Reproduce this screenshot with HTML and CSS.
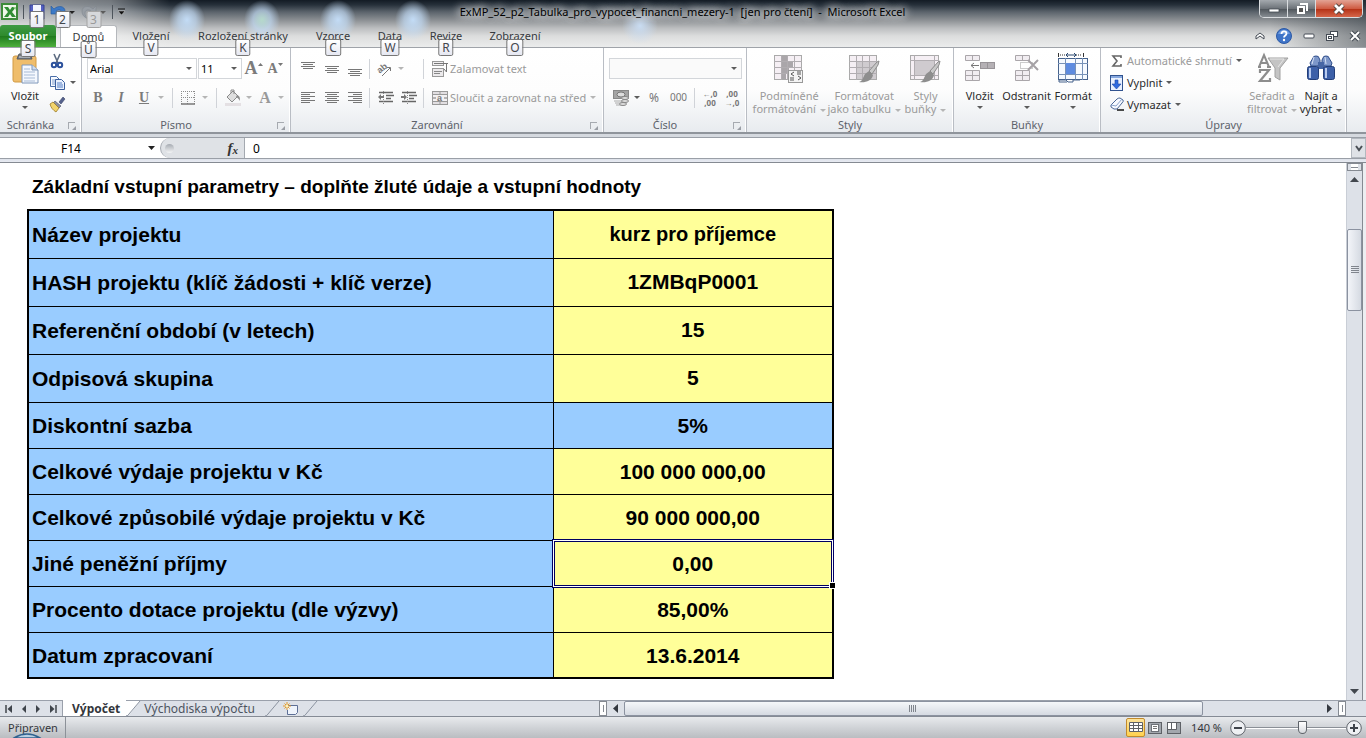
FILE: index.html
```html
<!DOCTYPE html>
<html lang="cs">
<head>
<meta charset="utf-8">
<title>ExMP_52_p2_Tabulka_pro_vypocet_financni_mezery-1 - Microsoft Excel</title>
<link rel="stylesheet" href="styles.css">
</head>
<body>
<header class="top">
  <div class="titlebar">
    <div class="qat">
      <svg class="logo" width="18" height="18" viewBox="0 0 18 18"><rect x="1" y="1" width="15" height="15" fill="#eef7ea" stroke="#3c8a3a" stroke-width="2"/><path d="M3 4h4l2 3 2-3h4l-4 5 4 5h-4l-2-3-2 3H3l4-5z" fill="#2f8d34"/><path d="M12 4h3v3z" fill="#9bd08f"/></svg>
      <span class="bar"></span>
      <button class="q q1" aria-label="Uložit"><svg width="16" height="16" viewBox="0 0 16 16"><path d="M1 1h14v14H1z" fill="#5560c4" stroke="#34408f"/><path d="M4 1h8v8H4z" fill="#f4f6ff"/><path d="M4 11h8v4H4z" fill="#dfe3f5"/></svg><kbd>1</kbd></button>
      <button class="q q2" aria-label="Zpět"><svg width="16" height="16" viewBox="0 0 16 16"><path d="M1 2v8h8L6 7c3-2 6-1 6 2 0 2-1 4-3 6 4-2 6-4 6-8 0-5-7-6-11-2z" fill="#3d79c6" stroke="#24589c" stroke-width=".6"/></svg><i class="caret dark"></i><kbd>2</kbd></button>
      <button class="q q3" aria-label="Znovu"><svg width="16" height="16" viewBox="0 0 16 16"><path d="M15 2v8H7l3-3C7 5 4 6 4 9c0 2 1 4 3 6-4-2-6-4-6-8 0-5 7-6 11-2z" fill="#979da4" stroke="#7f868e" stroke-width=".6"/></svg><i class="caret"></i><kbd class="off">3</kbd></button>
      <span class="bar"></span>
      <button class="q" aria-label="Přizpůsobit panel"><svg width="9" height="8" viewBox="0 0 9 8"><path d="M1 1h7" stroke="#111"/><path d="M1 3h7L4.500 7z" fill="#111" stroke="#eee" stroke-width=".4"/></svg></button>
    </div>
    <h1><span>ExMP_52_p2_Tabulka_pro_vypocet_financni_mezery-1&nbsp; [jen pro čtení]&nbsp; -&nbsp; Microsoft Excel</span></h1>
    <div class="wincontrols">
      <button aria-label="Minimalizovat"><svg width="14" height="12" viewBox="0 0 14 12"><rect x="2" y="6" width="10" height="3" fill="#fff" stroke="#444b53" stroke-width=".8"/></svg></button>
      <button aria-label="Obnovit"><svg width="14" height="14" viewBox="0 0 14 14"><path d="M5 2h7v7" fill="none" stroke="#fff" stroke-width="2"/><rect x="3" y="5" width="6" height="6" fill="#555" stroke="#fff" stroke-width="2"/></svg></button>
      <button class="close" aria-label="Zavřít"><svg width="14" height="12" viewBox="0 0 14 12"><path d="M3 2l8 8M11 2l-8 8" stroke="#56453f" stroke-width="4.600"/><path d="M3 2l8 8M11 2l-8 8" stroke="#fff" stroke-width="2.800"/></svg></button>
    </div>
  </div>
  <div class="tabrow">
    <nav class="tabs">
      <button class="file">Soubor<kbd>S</kbd></button>
      <button class="active">Domů<kbd>Ů</kbd></button>
      <button>Vložení<kbd>V</kbd></button>
      <button>Rozložení stránky<kbd>K</kbd></button>
      <button>Vzorce<kbd>C</kbd></button>
      <button>Data<kbd>W</kbd></button>
      <button>Revize<kbd>R</kbd></button>
      <button>Zobrazení<kbd>O</kbd></button>
    </nav>
    <div class="docs">
      <button aria-label="Sbalit pás karet"><svg width="10" height="8" viewBox="0 0 10 8"><path d="M1 7V4l4-3 4 3v3L5 4z" fill="#fff" stroke="#444b54"/></svg></button>
      <button aria-label="Nápověda"><svg width="16" height="16" viewBox="0 0 16 16"><circle cx="8" cy="8" r="7.500" fill="#3f74c8" stroke="#2d5aa6"/><path d="M2 6a6.500 6.500 0 0 1 12 0z" fill="#6e9be0"/><path d="M5.500 6c0-3.500 5-3.500 5-.5 0 2-2.500 2-2.500 4" fill="none" stroke="#fff" stroke-width="1.800"/><circle cx="8" cy="12" r="1.200" fill="#fff"/></svg></button>
      <button aria-label="Minimalizovat sešit"><svg width="12" height="6" viewBox="0 0 12 6"><rect x="1" y="1" width="10" height="4" rx="1" fill="#fff" stroke="#444b54"/></svg></button>
      <button aria-label="Obnovit sešit"><svg width="12" height="12" viewBox="0 0 12 12"><rect x="4.500" y="1.500" width="7" height="5" fill="#fff" stroke="#444b54"/><rect x=".5" y="4.500" width="7" height="6" fill="#fff" stroke="#444b54"/><rect x="2.500" y="6.500" width="3" height="2" fill="none" stroke="#444b54"/></svg></button>
      <button aria-label="Zavřít sešit"><svg width="12" height="10" viewBox="0 0 12 10"><path d="M2 1l8 8M10 1L2 9" stroke="#444b54" stroke-width="4"/><path d="M2 1l8 8M10 1L2 9" stroke="#fff" stroke-width="2"/></svg></button>
    </div>
  </div>
</header>

<section class="ribbon">
  <div class="group g-clip">
    <div class="body">
      <button class="big"><svg width="32" height="32" viewBox="0 0 32 32"><rect x="4" y="3" width="23" height="26" rx="2" fill="#efbd6b" stroke="#d29b45"/><path d="M10 1h11l2 5H8z" fill="#777c84" stroke="#555b63"/><path d="M10 4h11" stroke="#d8dce2"/><path d="M13 12h10l6 5v13H13z" fill="#f4f8fe" stroke="#7e97ba"/><path d="M23 12v5h6" fill="#cddcf0" stroke="#7e97ba"/><path d="M15 16h6M15 19h11M15 22h11M15 25h11M15 28h11" stroke="#a8bbd6"/></svg><span>Vložit</span><i class="caret"></i></button>
      <div class="stack">
        <button aria-label="Vyjmout"><svg width="16" height="16" viewBox="0 0 16 16"><path d="M5 1l4 9M11 1L7 10" stroke="#5c6b80" stroke-width="1.600"/><circle cx="5" cy="12" r="2.200" fill="none" stroke="#2c519c" stroke-width="2"/><circle cx="11" cy="12" r="2.200" fill="none" stroke="#2c519c" stroke-width="2"/></svg></button>
        <button aria-label="Kopírovat"><svg width="16" height="16" viewBox="0 0 16 16"><path d="M1.500 1.500h6l3 3v7h-9z" fill="#f7faff" stroke="#4a6ea8"/><path d="M3 5h5M3 7h5M3 9h5" stroke="#7f9ccc"/><path d="M6.500 4.500h6l3 3v7h-9z" fill="#eaf1fd" stroke="#3b5f9d"/><path d="M8 8h5M8 10h6M8 12h6" stroke="#557fc4"/></svg><i class="caret"></i></button>
        <button aria-label="Kopírovat formát"><svg width="16" height="16" viewBox="0 0 16 16"><path d="M10 6l4-5 2 2-4 5z" fill="#54618c" stroke="#3b4468" stroke-width=".6"/><path d="M6 5l6 5-2 2-6-5z" fill="#8b8fa0" stroke="#4f5468" stroke-width=".6"/><path d="M4 6l6 6-3 4C4 14 2 12 1 8z" fill="#f2d46c" stroke="#9a7a2a" stroke-width=".8"/></svg></button>
      </div>
    </div>
    <h2>Schránka<i class="launch"></i></h2>
  </div>

  <div class="group g-font">
    <div class="body rows">
      <div class="row r-font1">
        <label class="combo"><select aria-label="Písmo"><option>Arial</option></select><i class="caret"></i></label>
        <label class="combo"><select aria-label="Velikost písma"><option>11</option></select><i class="caret"></i></label>
        <button class="serif s18" aria-label="Zvětšit písmo">A<svg width="5" height="16" viewBox="0 0 5 16"><path d="M0 5h5L2.500 2z" fill="#777"/></svg></button>
        <button class="serif s14" aria-label="Zmenšit písmo">A<svg width="5" height="16" viewBox="0 0 5 16"><path d="M0 2h5L2.500 5z" fill="#777"/></svg></button>
      </div>
      <div class="row r-font2">
        <button class="serif s14">B</button>
        <button class="serif s14 it">I</button>
        <button class="serif s14 un">U</button>
        <i class="caret lt"></i><span class="sep"></span>
        <button aria-label="Ohraničení"><svg width="14" height="14" viewBox="0 0 14 14"><path d="M.5 0v13M6.500 0v13M13.500 0v13M0 .5h14M0 6.500h14" stroke="#8c8c8c" stroke-dasharray="1 1"/><path d="M0 13h14" stroke="#777" stroke-width="1.500"/></svg></button>
        <i class="caret lt"></i><span class="sep"></span>
        <button aria-label="Barva výplně"><svg width="17" height="17" viewBox="0 0 17 17"><path d="M2 8l6-6 5 5-6 6z" fill="#dedede" stroke="#8a8a8a"/><path d="M6 4V1h3v4" fill="none" stroke="#8a8a8a"/><path d="M12 6c3 1 3 3 3 6-1-2-2-3-4-4z" fill="#8a8a8a"/><path d="M0 14h16v3H0z" fill="#e4e0e3"/></svg></button>
        <i class="caret lt"></i>
        <button class="serif s16 lite">A</button>
        <i class="caret lt"></i>
      </div>
    </div>
    <h2>Písmo<i class="launch"></i></h2>
  </div>

  <div class="group g-align">
    <div class="body rows">
      <div class="row r-al1">
        <button aria-label="Nahoru"><svg width="14" height="14" viewBox="0 0 14 14"><path d="M0 .5h14M2 2.500h10M0 4.500h14M2 6.500h10" stroke="#777"/></svg></button>
        <button aria-label="Na střed svisle"><svg width="14" height="14" viewBox="0 0 14 14"><path d="M0 4.500h14M2 6.500h10M0 8.500h14M2 10.500h10" stroke="#777"/></svg></button>
        <button aria-label="Dolů"><svg width="14" height="14" viewBox="0 0 14 14"><path d="M0 7.500h14M2 9.500h10M0 11.500h14M2 13.500h10" stroke="#777"/></svg></button>
        <span class="sep"></span>
        <button aria-label="Orientace"><svg width="18" height="16" viewBox="0 0 18 16"><text x="1" y="11" class="abtext" transform="rotate(-40 5 8)">ab</text><path d="M6 15l8-8M11 6.500h3.500V10" fill="none" stroke="#777"/></svg></button>
        <i class="caret lt"></i><span class="sep end"></span>
        <button class="cmd off"><svg width="16" height="16" viewBox="0 0 16 16"><rect x=".5" y=".5" width="11" height="4" fill="#f1eff1" stroke="#999"/><path d="M2 2.500h14M14.500 3v7M12 8l2.500 3V8" fill="none" stroke="#777"/><rect x=".5" y="7.500" width="11" height="8" fill="#eceaec" stroke="#999"/><path d="M2 10.500h8M2 12.500h6" stroke="#888"/></svg>Zalamovat text</button>
      </div>
      <div class="row r-al2">
        <button aria-label="Vlevo"><svg width="14" height="12" viewBox="0 0 14 12"><path d="M0 .5h14M0 2.500h9M0 4.500h14M0 6.500h9M0 8.500h14M0 10.500h9" stroke="#777"/></svg></button>
        <button aria-label="Na střed"><svg width="14" height="12" viewBox="0 0 14 12"><path d="M0 .5h14M2 2.500h10M0 4.500h14M2 6.500h10M0 8.500h14M2 10.500h10" stroke="#777"/></svg></button>
        <button aria-label="Vpravo"><svg width="14" height="12" viewBox="0 0 14 12"><path d="M0 .5h14M5 2.500h9M0 4.500h14M5 6.500h9M0 8.500h14M5 10.500h9" stroke="#777"/></svg></button>
        <span class="sep"></span>
        <button aria-label="Zmenšit odsazení"><svg width="16" height="14" viewBox="0 0 16 14"><path d="M1 1.500h14M8 4.500h8M8 7.500h5M1 10.500h14" stroke="#666" stroke-width="1.500"/><path d="M5.500 0v14" stroke="#888" stroke-dasharray="1 1"/><path d="M0 6l3-3v2h3v2H3v2z" fill="#777"/></svg></button>
        <button aria-label="Zvětšit odsazení"><svg width="16" height="14" viewBox="0 0 16 14"><path d="M1 1.500h14M8 4.500h8M8 7.500h5M1 10.500h14" stroke="#666" stroke-width="1.500"/><path d="M6.500 0v14" stroke="#888" stroke-dasharray="1 1"/><path d="M6 6L3 3v2H0v2h3v2z" fill="#777"/></svg></button>
        <span class="sep end2"></span>
        <button class="cmd off"><svg width="16" height="14" viewBox="0 0 16 14"><rect x=".5" y=".5" width="15" height="13" fill="#e2dfe2" stroke="#999"/><path d="M0 3.500h16M0 10.500h16M8 0v3M8 11v3" stroke="#999"/><rect x="1" y="4" width="14" height="6" fill="#f3f1f3"/><path d="M1 7h3M12 7h3" stroke="#777"/><text x="5" y="10" class="abtext">a</text></svg>Sloučit a zarovnat na střed<i class="caret lt"></i></button>
      </div>
    </div>
    <h2>Zarovnání<i class="launch"></i></h2>
  </div>

  <div class="group g-num">
    <div class="body rows">
      <div class="row">
        <label class="combo wide"><select aria-label="Formát čísla" disabled><option></option></select><i class="caret"></i></label>
      </div>
      <div class="row r-num2">
        <button aria-label="Účetnický formát"><svg width="17" height="17" viewBox="0 0 17 17"><rect x=".5" y="1.500" width="15" height="8" fill="#a4a4a4" stroke="#888"/><ellipse cx="8" cy="5.500" rx="4" ry="2.500" fill="#ddd" stroke="#777"/><path d="M1 12h9M2 14h8M3 16h7" stroke="#aaa"/><ellipse cx="12" cy="9" rx="3.500" ry="1.500" fill="#ddd" stroke="#888"/><ellipse cx="12" cy="12" rx="3.500" ry="1.500" fill="#ddd" stroke="#888"/><ellipse cx="10" cy="15" rx="3.500" ry="1.500" fill="#ddd" stroke="#888"/></svg></button>
        <i class="caret"></i>
        <button class="numt">%</button>
        <button class="numt small">000</button>
        <span class="sep"></span>
        <button class="dec" aria-label="Přidat desetinné místo"><span>←,0</span><span>,00</span></button>
        <button class="dec" aria-label="Odebrat desetinné místo"><span>,00</span><span>→,0</span></button>
      </div>
    </div>
    <h2>Číslo<i class="launch"></i></h2>
  </div>

  <div class="group g-style">
    <div class="body">
      <button class="big off"><svg width="32" height="32" viewBox="0 0 32 32"><rect x="1.500" y="2.500" width="27" height="24" fill="#f5eff4" stroke="#aaa"/><path d="M8 3h6v5h6v6h-4v6h-3v6H8z" fill="#aaa6aa"/><path d="M1 8.500h28M1 14.500h28M1 20.500h28M8.500 2v25M14.500 2v25M21.500 2v25" stroke="#b1adb1"/><rect x="15.500" y="17.500" width="14" height="12" fill="#f4f4f4" stroke="#999"/><path d="M21 19l-3 2 3 2M17 25h4M17 27h4M24 19h4M24 21h4M25 23l3 2-3 2" fill="none" stroke="#555"/></svg><span>Podmíněné<br>formátování<i class="caret lt"></i></span></button>
      <button class="big off"><svg width="32" height="32" viewBox="0 0 32 32"><rect x="1.500" y="2.500" width="27" height="24" fill="#f5eff4" stroke="#aaa"/><path d="M9 9h19v17H9z" fill="#cfcbcf"/><path d="M1 8.500h28M1 14.500h28M1 20.500h28M8.500 2v25M14.500 2v25M21.500 2v25" stroke="#b1adb1"/><path d="M21 18l8-9 2-1-1 4-6 9z" fill="#c8c8c8" stroke="#8b8b8b"/><path d="M21 18l4 4c-1 6-8 8-14 7 4-1 4-5 6-8z" fill="#8e8e8e"/></svg><span>Formátovat<br>jako tabulku<i class="caret lt"></i></span></button>
      <button class="big off"><svg width="32" height="32" viewBox="0 0 32 32"><rect x="1.500" y="2.500" width="28" height="24" fill="#f5eff4" stroke="#aaa"/><path d="M6 8h19v14H6z" fill="#cfcbcf"/><path d="M1 7.500h29M1 22.500h29M5.500 2v25M25.500 2v25" stroke="#b1adb1"/><path d="M21 18l8-9 2-1-1 4-6 9z" fill="#c8c8c8" stroke="#8b8b8b"/><path d="M21 18l4 4c-1 6-8 8-14 7 4-1 4-5 6-8z" fill="#8e8e8e"/></svg><span>Styly<br>buňky<i class="caret lt"></i></span></button>
    </div>
    <h2>Styly</h2>
  </div>

  <div class="group g-cells">
    <div class="body">
      <button class="big"><svg width="32" height="32" viewBox="0 0 32 32"><g fill="#f1edf1" stroke="#aaa6aa"><path d="M1.500 2.500h14v5h-14zM8.500 2.500v5M1.500 17.500h14v10h-14zM8.500 17.500v10M1.500 22.500h14"/></g><rect x="16.500" y="9.500" width="14" height="6" fill="#b5b1b5" stroke="#989498"/><path d="M23.500 10v6" stroke="#989498"/><path d="M7 12.500h8M10 10l-3 2.500L10 15" fill="none" stroke="#777"/></svg><span>Vložit</span><i class="caret"></i></button>
      <button class="big"><svg width="32" height="32" viewBox="0 0 32 32"><g fill="#f1edf1" stroke="#aaa6aa"><path d="M4.500 2.500h14v5h-14zM11.500 2.500v5M4.500 17.500h14v10h-14zM11.500 17.500v10M4.500 22.500h14"/></g><path d="M9.500 9.500h12v6h-12z" fill="none" stroke="#999" stroke-dasharray="1 1"/><path d="M17 7l10 10M27 7L17 17" stroke="#a5a1a5" stroke-width="2"/></svg><span>Odstranit</span><i class="caret"></i></button>
      <button class="big"><svg width="32" height="32" viewBox="0 0 32 32"><path d="M1.500 0v4M26.500 0v4" stroke="#333"/><path d="M3 2h6M19 2h6" stroke="#333" stroke-dasharray="1 1"/><path d="M9 2h10M11 0L9 2l2 2M17 0l2 2-2 2" stroke="#29466e" fill="none"/><rect x="1.500" y="5.500" width="29" height="21" fill="#f6faff" stroke="#46628c"/><path d="M1 10.500h30M1 21.500h30M8.500 5v22M18.500 5v22M25.500 5v22" stroke="#7892b8"/><rect x="9" y="10" width="9" height="11" fill="#5d8be0"/><path d="M2 27h7l2 2h5v-2h7M2 27v2h8" fill="none" stroke="#46628c"/></svg><span>Formát</span><i class="caret"></i></button>
    </div>
    <h2>Buňky</h2>
  </div>

  <div class="group g-edit">
    <div class="body">
      <div class="stack wide">
        <button class="cmd off"><svg width="14" height="14" viewBox="0 0 14 14"><path d="M11 4V2H3l4 5-4 5h8v-2" fill="none" stroke="#666" stroke-width="1.600"/></svg>Automatické shrnutí<i class="caret"></i></button>
        <button class="cmd"><svg width="14" height="16" viewBox="0 0 14 16"><rect x=".5" y=".5" width="12" height="15" fill="#e9f1ff" stroke="#31538f"/><path d="M1 2h11" stroke="#87a8df" stroke-width="2"/><path d="M5 5h3v4h3l-4.500 5L2 9h3z" fill="#2f6be0" stroke="#1b47a5" stroke-width=".6"/></svg>Vyplnit<i class="caret"></i></button>
        <button class="cmd"><svg width="14" height="14" viewBox="0 0 14 14"><path d="M1 8l6-6q1-1 3-1l3 2q1 1-1 3l-5 6H4L1 10z" fill="#f8faff" stroke="#4a6796"/><path d="M1 8l5 1 6-7" fill="none" stroke="#8ba4cc"/><path d="M7 13h7" stroke="#111" stroke-width="1.500"/></svg>Vymazat<i class="caret"></i></button>
      </div>
      <button class="big off"><svg width="32" height="32" viewBox="0 0 32 32"><path d="M12 5h20l-8 10v12l-5-3v-9z" fill="#c4c4c4" stroke="#a0a0a0"/><path d="M14 6h14l-6 8" fill="none" stroke="#e6e6e6"/><path d="M3 14L8 2l5 12M5 10h6M2 14h3M11 14h4" fill="none" stroke="#8d8d8d" stroke-width="2"/><path d="M4 20v-3h9L4 28h10v-3" fill="none" stroke="#8d8d8d" stroke-width="2.200"/></svg><span>Seřadit a<br>filtrovat<i class="caret lt"></i></span></button>
      <button class="big"><svg width="32" height="32" viewBox="0 0 32 32"><path d="M8 5q0-2 3-2t3 2l1 2v2l-2 4H6l-1-3z" fill="#7d97c9" stroke="#2f4d8a"/><path d="M18 5q0-2 3-2t3 2l3 5-1 3h-7l-2-4V7z" fill="#7d97c9" stroke="#2f4d8a"/><path d="M13 9h6v7h-6z" fill="#4666a5"/><rect x="2.500" y="13.500" width="11" height="13" rx="2" fill="#3d60a8" stroke="#233e78"/><rect x="18.500" y="13.500" width="11" height="13" rx="2" fill="#3d60a8" stroke="#233e78"/><path d="M5 15v10M21 15v10" stroke="#b9cbee" stroke-width="2"/><path d="M9 4l-2 7M20 4l1 7" stroke="#d5e0f5"/></svg><span>Najít a<br>vybrat<i class="caret"></i></span></button>
    </div>
    <h2>Úpravy</h2>
  </div>
</section>

<div class="formulabar">
  <input class="namebox" aria-label="Pole názvů" value="F14">
  <button class="namearrow" aria-label="Názvy"><svg width="7" height="4" viewBox="0 0 7 4"><path d="M0 0h7L3.500 4z" fill="#222"/></svg></button>
  <div class="fxarea"><span class="knob"></span><button class="fx" aria-label="Vložit funkci">f<small>x</small></button></div>
  <input class="formula" aria-label="Řádek vzorců" value="0">
  <button class="expand" aria-label="Rozbalit řádek vzorců"><svg width="8" height="7" viewBox="0 0 8 7"><path d="M1 1l3 4 3-4" fill="none" stroke="#4a4f56" stroke-width="2"/></svg></button>
</div>

<main class="workspace">
  <div class="sheet">
    <h3>Základní vstupní parametry – doplňte žluté údaje a vstupní hodnoty</h3>
    <table>
      <tr class="tall"><th>Název projektu</th><td class="sm">kurz pro příjemce</td></tr>
      <tr class="tall"><th>HASH projektu (klíč žádosti + klíč verze)</th><td>1ZMBqP0001</td></tr>
      <tr class="tall"><th>Referenční období (v letech)</th><td>15</td></tr>
      <tr class="tall"><th>Odpisová skupina</th><td>5</td></tr>
      <tr><th>Diskontní sazba</th><td class="blue">5%</td></tr>
      <tr><th>Celkové výdaje projektu v Kč</th><td>100 000 000,00</td></tr>
      <tr><th>Celkové způsobilé výdaje projektu v Kč</th><td>90 000 000,00</td></tr>
      <tr><th>Jiné peněžní příjmy</th><td class="cursor">0,00</td></tr>
      <tr><th>Procento dotace projektu (dle výzvy)</th><td>85,00%</td></tr>
      <tr><th>Datum zpracovaní</th><td>13.6.2014</td></tr>
    </table>
  </div>
  <div class="vscroll">
    <span class="split"></span>
    <button class="arrow" aria-label="Nahoru"><svg width="9" height="5" viewBox="0 0 9 5"><path d="M0 5h9L4.500 0z" fill="#42474e"/></svg></button>
    <div class="track"><div class="thumb"><svg width="8" height="8" viewBox="0 0 8 8"><path d="M0 .5h8M0 2.500h8M0 4.500h8M0 6.500h8" stroke="#80858d"/></svg></div></div>
    <button class="arrow" aria-label="Dolů"><svg width="9" height="5" viewBox="0 0 9 5"><path d="M0 0h9L4.500 5z" fill="#42474e"/></svg></button>
  </div>
  <div class="edge"></div>
</main>

<div class="sheetbar">
  <div class="left">
    <div class="nav">
      <button aria-label="První list"><svg width="8" height="8" viewBox="0 0 8 8"><path d="M1 0v8" stroke="#3f444b" stroke-width="1.500"/><path d="M7 0v8L2.500 4z" fill="#3f444b"/></svg></button>
      <button aria-label="Předchozí list"><svg width="8" height="8" viewBox="0 0 8 8"><path d="M6 0v8L2 4z" fill="#3f444b"/></svg></button>
      <button aria-label="Další list"><svg width="8" height="8" viewBox="0 0 8 8"><path d="M2 0v8l4-4z" fill="#3f444b"/></svg></button>
      <button aria-label="Poslední list"><svg width="8" height="8" viewBox="0 0 8 8"><path d="M7 0v8" stroke="#3f444b" stroke-width="1.500"/><path d="M1 0v8l4.500-4z" fill="#3f444b"/></svg></button>
    </div>
    <button class="sheettab current">Výpočet</button>
    <svg class="slant" width="14" height="16" viewBox="0 0 14 16"><path d="M0 0h14L3 14H0z" fill="#fff"/><path d="M14 0L3 13q-1 2-3 2" fill="none" stroke="#8b93a0"/></svg>
    <button class="sheettab next">Východiska výpočtu</button>
    <svg class="slant" width="14" height="16" viewBox="0 0 14 16"><path d="M14 0L3 13q-1 2-3 2" fill="none" stroke="#8b93a0"/></svg>
    <button class="newtab" aria-label="Vložit list"><svg width="16" height="14" viewBox="0 0 16 14"><path d="M5 3.500h9.500v7l-2 2H4.500V8" fill="#eef3fb" stroke="#5d6f96"/><path d="M4 0v8M0 4h8M1.500 1.500l5 5M6.500 1.500l-5 5" stroke="#e39a2b"/><circle cx="4" cy="4" r="1.300" fill="#fff3b8"/></svg></button>
    <svg class="slant" width="14" height="16" viewBox="0 0 14 16"><path d="M14 0L3 13q-1 2-3 2" fill="none" stroke="#8b93a0"/></svg>
  </div>
  <div class="hscroll">
    <span class="split"></span>
    <button class="arrow" aria-label="Doleva"><svg width="5" height="9" viewBox="0 0 5 9"><path d="M5 0v9L0 4.500z" fill="#33383f"/></svg></button>
    <div class="track"><div class="thumb"><svg width="8" height="7" viewBox="0 0 8 7"><path d="M.5 0v7M2.500 0v7M4.500 0v7M6.500 0v7" stroke="#80858d"/></svg></div></div>
    <button class="arrow" aria-label="Doprava"><svg width="5" height="9" viewBox="0 0 5 9"><path d="M0 0v9l5-4.500z" fill="#33383f"/></svg></button>
    <span class="split"></span>
  </div>
</div>

<footer class="status">
  <span class="ready">Připraven</span>
  <svg class="orb" width="28" height="5" viewBox="0 0 28 5"><path d="M1 5Q14-3 27 5z" fill="#b8cfe2" stroke="#2f618f" stroke-width="1.500"/></svg>
  <div class="views">
    <button class="on" aria-label="Normálně"><svg width="14" height="11" viewBox="0 0 14 11"><path d="M.5.500h13v9H.5zM.5 3.500h13M.5 6.500h13M4.500.500v9M9.500.500v9" fill="#fff" stroke="#5e6166"/></svg></button>
    <button aria-label="Rozložení stránky"><svg width="14" height="12" viewBox="0 0 14 12"><rect x=".5" y=".5" width="13" height="11" fill="#a2a7ad" stroke="#5e6166"/><rect x="3.500" y="2.500" width="7" height="7" fill="#fff" stroke="#6e7278"/><path d="M5 4.500h4M5 6.500h4" stroke="#777"/></svg></button>
    <button aria-label="Konce stránek"><svg width="14" height="12" viewBox="0 0 14 12"><rect x=".5" y=".5" width="13" height="11" fill="#a2a7ad" stroke="#5e6166"/><path d="M1 1h3v6H1zM5 1h4v6H5z" fill="#fff"/><path d="M4.500 1v6.500M0 7.500h9.500V1" fill="none" stroke="#5e6166"/></svg></button>
  </div>
  <span class="pct">140 %</span>
  <button class="round" aria-label="Oddálit"><svg width="16" height="16" viewBox="0 0 16 16"><circle cx="8" cy="8" r="7.300" fill="#eef0f3" stroke="#60656c"/><path d="M4 8h8" stroke="#3f444b" stroke-width="2"/></svg></button>
  <input class="zoom" type="range" min="0" max="100" value="57" aria-label="Lupa">
  <button class="round" aria-label="Přiblížit"><svg width="16" height="16" viewBox="0 0 16 16"><circle cx="8" cy="8" r="7.300" fill="#eef0f3" stroke="#60656c"/><path d="M4 8h8M8 4v8" stroke="#3f444b" stroke-width="2"/></svg></button>
</footer>
</body>
</html>
```

FILE: styles.css
```css
* { box-sizing: border-box; }
body {
  margin: 0; height: 100vh; overflow: hidden; background: #fff; color: #2b2b2b;
  display: flex; flex-direction: column;
  font: 11px/13px "Noto Sans", "Open Sans", sans-serif;
}
button, input, select { font: inherit; color: inherit; margin: 0; padding: 0; border: 0; background: none; border-radius: 0; }
button { display: flex; align-items: center; justify-content: center; white-space: nowrap; }
svg { display: block; flex: none; overflow: visible; }
h1, h2, h3 { margin: 0; font-weight: normal; }
.caret { flex: none; width: 0; height: 0; border: 3px solid transparent; border-top-color: #5c5c5c; border-bottom: 0; }
.caret.dark { border-top-color: #222; }
.caret.lt { border-top-color: #b5b5b5; }

kbd {
  position: absolute; left: 50%; top: 15px; transform: translateX(-50%); z-index: 3;
  min-width: 15px; height: 17px; padding: 0 3px; border: 1px solid #767676; border-radius: 2px;
  background: linear-gradient(#fff, #e6e8f2); color: #44474d; text-align: center;
  font: 12px/15px "Noto Sans", sans-serif;
}
kbd.off { color: #9a9a9a; background: #d6d8db; border-color: #a4a4a4; }

.top {
  flex: none; border-bottom: 1px solid #9fa3a9;
  background:
    radial-gradient(ellipse 18px 20px at 187px 20px, #c3dcf6, #c3dcf6aa 50%, #c3dcf600),
    radial-gradient(ellipse 18px 20px at 262px 20px, #b5d9cb, #c3dcf6aa 50%, #c3dcf600),
    radial-gradient(ellipse 18px 20px at 338px 20px, #c3dcf6, #c3dcf6aa 50%, #c3dcf600),
    radial-gradient(ellipse 18px 20px at 413px 20px, #c3dcf6, #c3dcf6aa 50%, #c3dcf600),
    radial-gradient(ellipse 18px 18px at 640px 26px, #c9dcf2, #c9dcf200),
    linear-gradient(90deg, #ffffff88 0, #ffffff66 110px, #ffffff00 170px, #ffffff00 1270px, #30383f88 100%),
    linear-gradient(#131b24 0, #27313b 5px, #5c646c 12px, #8b8f93 20px, #bbbdbf 28px, #dcdddd 36px, #ebecec 47px);
}
.titlebar { display: flex; height: 24px; align-items: flex-start; }
.titlebar h1 {
  flex: 1; padding-right: 24px; text-align: center; font-size: 11px; line-height: 24px; color: #000; white-space: nowrap;
  text-shadow: 0 0 8px #fff, 0 0 10px #fff, 0 0 12px #fffc;
}
.qat { display: flex; align-items: center; height: 24px; padding-left: 1px; gap: 2px; width: 130px; }
.qat .bar { width: 1px; height: 14px; background: #4e555c; margin: 0 2px; }
.q { position: relative; gap: 3px; height: 20px; }
.q1 { width: 18px; }
.q2 { width: 29px; }
.q3 { width: 29px; }
.q kbd { top: 9px; }
.wincontrols {
  display: flex; height: 18px; margin-right: 3px; border: 1px solid #d9dcdf; border-top: 0;
  border-radius: 0 0 5px 5px; overflow: hidden; width: 104px;
}
.wincontrols button { width: 28px; background: linear-gradient(#a4a9ae, #6d7379 50%, #4d5359 51%, #868c92); border-right: 1px solid #d9dcdf; }
.wincontrols .close { flex: 1; border: 0; background: linear-gradient(#e3a394, #cf5c43 50%, #b32f14 51%, #d5664a); }

.tabrow { display: flex; justify-content: space-between; height: 23px; }
.tabs { display: grid; grid-template-columns: 57px 60px 68px 116px 64px 50px 62px 76px; }
.tabs button { position: relative; padding-bottom: 1px; color: #36393d; }
.tabs .file { margin: 1px 1px 0 0; border-radius: 3px 3px 0 0; background: linear-gradient(#3f9b45, #2e8a2c 50%, #1f7a1d 51%, #4eb03c); color: #fff; font-weight: bold; }
.tabs .active { margin: 1px 0 0 3px; border: 1px solid #b5b8bc; border-bottom: 0; border-radius: 3px 3px 0 0; background: #fff; }
.tabs kbd { font-weight: normal; }
.docs { display: flex; align-items: center; gap: 11px; padding-right: 5px; }

.ribbon { display: flex; flex: none; height: 86px; background: linear-gradient(#fff 0, #fdfdfd 50%, #e8ebef 100%); border-bottom: 2px solid #8f949b; }
.group { display: flex; flex-direction: column; flex: none; border-right: 1px solid #b9bdc4; box-shadow: inset -1px 0 #fff; }
.g-clip { width: 82px; } .g-font { width: 209px; } .g-align { width: 313px; } .g-num { width: 143px; }
.g-style { width: 207px; } .g-cells { width: 147px; } .g-edit { width: 246px; }
.group h2 { position: relative; flex: none; height: 17px; padding-right: 20px; font-size: 11px; line-height: 19px; text-align: center; color: #5d626b; }
.g-style h2, .g-cells h2, .g-edit h2 { padding-right: 0; }
.launch { position: absolute; right: 6px; top: 7px; width: 7px; height: 7px; border: 1px solid #a6aab0; border-right: 0; border-bottom: 0; }
.launch::after { content: ""; position: absolute; right: -1px; bottom: -1px; border: 2px solid #9a9ea5; border-left-color: transparent; border-top-color: transparent; }
.body { display: flex; flex: 1; min-height: 0; padding: 5px 4px 0; }
.body.rows { flex-direction: column; gap: 8px; padding-top: 10px; }
.row { display: flex; flex: none; align-items: center; height: 21px; padding-left: 1px; }
.big { flex-direction: column; justify-content: flex-start; align-self: flex-start; }
.big span { margin-top: 4px; text-align: center; }
.big > .caret { margin-top: 4px; }
.big span .caret, .cmd .caret { display: inline-block; margin-left: 4px; vertical-align: middle; }
.off { color: #9a9a9a; }
.g-clip .big { width: 42px; }
.g-clip .body { padding-left: 4px; gap: 3px; }
.stack { display: flex; flex-direction: column; margin-top: -3px; }
.stack button { height: 22px; justify-content: flex-start; gap: 5px; }
.stack.wide { width: 142px; padding-left: 5px; }
.cmd svg { margin-right: 2px; }
.stack .cmd { gap: 1px; }
.stack .cmd .caret { margin-left: 3px; }
.combo { position: relative; height: 21px; border: 1px solid #d3d6da; background: #fff; display: flex; color: #000; }
.combo select { appearance: none; width: 100%; padding-left: 2px; outline: 0; }
.combo .caret { position: absolute; right: 4px; top: 8px; }
.combo.wide { width: 134px; background: #fafafa; }
.serif { font-family: "Liberation Serif", serif; font-weight: bold; color: #7b7b7b; }
.serif svg { align-self: flex-start; }
.s14 { font-size: 14px; } .s16 { font-size: 16px; } .s18 { font-size: 18px; }
.lite { color: #999; }
.it { font-style: italic; }
.un { text-decoration: underline; }
.sep { width: 1px; height: 20px; background: #d0d3d8; justify-self: center; }
.row .caret { justify-self: center; }
.r-font1 { display: grid; grid-template-columns: 110px 44px 21px 20px; column-gap: 1px; }
.r-font2 { display: grid; grid-template-columns: 22px 24px 22px 12px 10px 22px 12px 10px 24px 8px 24px 8px; }
.r-al1 { display: grid; grid-template-columns: 24px 23px 23px 6px 26px 6px 28px auto; justify-content: start; }
.r-al2 { display: grid; grid-template-columns: 24px 23px 23px 6px 28px 18px 14px auto; justify-content: start; }
.sep.end { justify-self: end; margin-right: 8px; }
.sep.end2 { justify-self: end; margin-right: 8px; }
.abtext { font: bold 9px "Liberation Sans", sans-serif; fill: #777; }
.r-num2 { display: grid; grid-template-columns: 24px 8px 26px 23px 8px 24px 20px; }
.numt { font-size: 12px; color: #777; }
.numt.small { font-size: 10px; }
.dec { flex-direction: column; font-size: 8px; line-height: 9px; color: #777; font-weight: bold; }
.g-style .body { padding-left: 5px; }
.g-style .big:nth-child(1) { width: 76px; } .g-style .big:nth-child(2) { width: 77px; } .g-style .big:nth-child(3) { width: 48px; }
.g-cells .body { padding-left: 3px; }
.g-cells .big { width: 48px; }
.g-edit .big { width: 48px; }
.g-edit .body { padding-right: 0; }
.g-edit .big:nth-child(2) { width: 50px; }

.formulabar {
  display: flex; flex: none; height: 29px; padding: 3px 0 5px; font-size: 12px; color: #000;
  background: linear-gradient(#d5d9df, #d5d9df 3px, #9a9fa7 3px, #9a9fa7 4px, #fff 4px, #fff 24px, #9a9fa7 24px, #9a9fa7 25px, #dde1ea 25px, #e8ebf2 28px, #858a92 28px);
}
.namebox { width: 142px; padding-top: 2px; text-align: center; outline: 0; }
.namearrow { width: 18px; }
.fxarea { width: 85px; margin: 1px 0 0; border: 1px solid #a4a9b0; border-width: 0 1px 0 1px; border-radius: 10px 0 0 10px; background: #dfe2e6; display: flex; align-items: center; justify-content: space-between; padding: 0 6px 0 4px; }
.knob { width: 9px; height: 9px; border-radius: 50%; background: linear-gradient(#a6abb2, #f4f5f6); }
.fx { font: italic bold 15px/18px "Liberation Serif", serif; color: #333; }
.fx small { font-size: 11px; padding-top: 4px; }
.formula { flex: 1; padding: 2px 0 0 8px; outline: 0; }
.expand { width: 15px; margin: 1px 0 0; border: 1px solid #b3b8bf; background: #dfe2e7; }

.workspace { display: flex; flex: 1; min-height: 0; }
.sheet { flex: 1; padding: 12px 0 0 27px; overflow: hidden; font-family: "Liberation Sans", Arial, sans-serif; color: #000; }
.sheet h3 { font-size: 19px; line-height: 24px; height: 34px; padding-left: 5px; font-weight: bold; white-space: nowrap; }
table { border-collapse: collapse; border: 2px solid #000; width: 807px; table-layout: fixed; font-size: 21px; line-height: 24px; font-weight: bold; }
th, td { height: 46px; padding: 2px 0 0 3px; border: 1px solid #000; }
.tall th, .tall td { height: 48px; }
.tall td { padding-top: 0; }
th { width: 525px; text-align: left; background: #9cf; }
td { text-align: center; background: #ff9; padding-left: 0; }
td.sm { font-size: 20px; }
td.blue { background: #9cf; }
td.cursor { position: relative; }
.cursor::before { content: ""; position: absolute; inset: -2px; border: 1px solid #000060; box-shadow: inset 0 0 0 1px #fff, inset 0 0 0 2px #000060; }
.cursor::after { content: ""; position: absolute; right: -4px; bottom: -3px; width: 5px; height: 5px; background: #000; border: 1px solid #fff; }

.vscroll { display: flex; flex-direction: column; width: 16px; background: #dde1e8; border-left: 1px solid #c9ced6; }
.vscroll .split { height: 8px; border: 1px solid #858a92; background: linear-gradient(#fff 3px, #858a92 3px, #858a92 4px, #fff 4px); background-clip: content-box; padding: 0 3px; }
.vscroll .arrow { height: 17px; }
.vscroll .track { flex: 1; padding-top: 41px; }
.vscroll .thumb, .hscroll .thumb { display: flex; align-items: center; justify-content: center; border: 1px solid #8b92a0; border-radius: 2px; background: linear-gradient(90deg, #f3f5f9, #d5dae2); }
.vscroll .thumb { height: 82px; }
.edge { width: 4px; border-left: 1px solid #858a92; background: #eceef1; }

.sheetbar { display: flex; flex: none; height: 17px; background: #dde1e8; border-bottom: 1px solid #858b95; font-size: 12px; }
.left { display: flex; width: 599px; border-top: 1px solid #9aa0ab; }
.nav { display: flex; width: 63px; justify-content: space-around; border-right: 1px solid #9aa0ab; padding: 0 2px; }
.sheettab { color: #4d5460; }
.current { background: #fff; font-weight: bold; color: #33363b; padding: 0 6px 0 9px; margin-top: -1px; }
.next { padding: 0 10px 0 4px; }
.newtab { padding: 0 4px; }
.hscroll { display: flex; flex: 1; padding-right: 20px; border-top: 1px solid #9aa0ab; }
.hscroll .split { width: 8px; border: 1px solid #858a92; background: linear-gradient(90deg, #fff 2px, #858a92 2px, #858a92 3px, #fff 3px) content-box, #fff; padding: 3px 1px; }
.hscroll .arrow { width: 17px; }
.hscroll .track { flex: 1; }
.hscroll .thumb { width: 83%; height: 100%; background: linear-gradient(#f5f7fa, #d5dae2); }

.status { display: flex; flex: none; align-items: center; height: 21px; position: relative; padding: 0 4px 0 8px; background: linear-gradient(#e8eaed, #d0d3d7 50%, #babdc1); color: #33363b; }
.ready { width: 58px; line-height: 21px; border-right: 1px solid #8c9198; }
.orb { position: absolute; left: 13px; bottom: 0; }
.views { display: flex; margin-left: auto; }
.views button { width: 19px; height: 19px; }
.views .on { border: 1px solid #c28a2c; border-radius: 2px; background: linear-gradient(#fde39a, #ffd24f); }
.pct { width: 47px; text-align: right; padding-right: 8px; white-space: nowrap; }
.zoom { appearance: none; width: 100px; height: 16px; outline: 0; background: linear-gradient(#0000 7px, #8a8f96 7px, #8a8f96 8px, #fff 8px, #fff 9px, #0000 9px); }
.zoom::-webkit-slider-thumb { appearance: none; width: 9px; height: 13px; background: linear-gradient(#fff, #d7dade); border: 1px solid #5e6369; border-radius: 1px 1px 5px 5px; }
```
